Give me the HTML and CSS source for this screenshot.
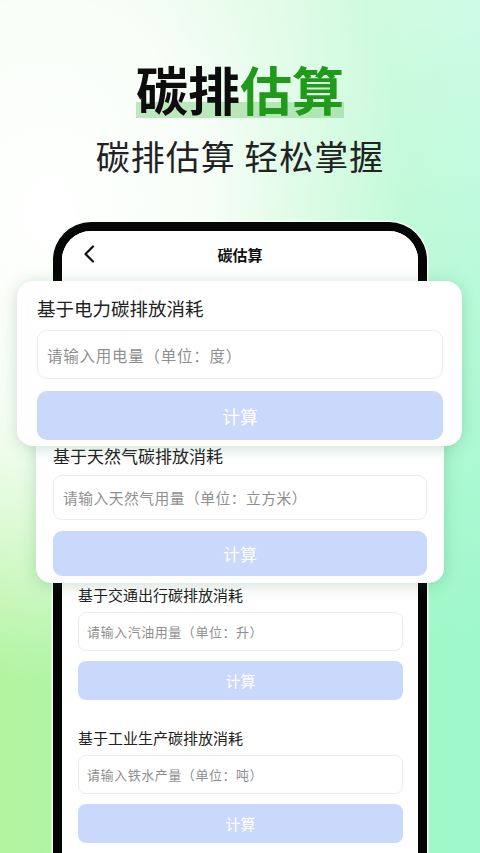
FILE: index.html
```html
<!DOCTYPE html>
<html lang="zh-CN">
<head>
<meta charset="UTF-8" />
<meta name="viewport" content="width=device-width, initial-scale=1" />
<title>碳排估算</title>
<link rel="stylesheet" href="styles.css">
</head>
<body>
  <main class="page">
    <header class="hero">
      <h1 class="hero-title">碳排<span class="green">估算</span></h1>
      <p class="hero-sub">碳排估算 轻松掌握</p>
    </header>

    <div class="phone">
      <div class="screen">
        <div class="topbar">
          <svg class="back" width="14" height="18" viewBox="0 0 14 18" aria-hidden="true">
            <path d="M11 1.5 L3.5 9 L11 16.5" fill="none" stroke="#111" stroke-width="2.2" stroke-linecap="round" stroke-linejoin="round"/>
          </svg>
          <span class="topbar-title">碳估算</span>
        </div>

        <div class="list">
          <section class="calc">
            <h2>基于电力碳排放消耗</h2>
            <input type="text" placeholder="请输入用电量（单位：度）">
            <button type="button">计算</button>
          </section>
          <section class="calc">
            <h2>基于天然气碳排放消耗</h2>
            <input type="text" placeholder="请输入天然气用量（单位：立方米）">
            <button type="button">计算</button>
          </section>
          <section class="calc">
            <h2>基于交通出行碳排放消耗</h2>
            <input type="text" placeholder="请输入汽油用量（单位：升）">
            <button type="button">计算</button>
          </section>
          <section class="calc">
            <h2>基于工业生产碳排放消耗</h2>
            <input type="text" placeholder="请输入铁水产量（单位：吨）">
            <button type="button">计算</button>
          </section>
        </div>
      </div>
    </div>

    <!-- enlarged cards floating over the phone -->
    <section class="pop pop-gas">
      <h2>基于天然气碳排放消耗</h2>
      <input type="text" placeholder="请输入天然气用量（单位：立方米）">
      <button type="button">计算</button>
    </section>
    <section class="pop pop-power">
      <h2>基于电力碳排放消耗</h2>
      <input type="text" placeholder="请输入用电量（单位：度）">
      <button type="button">计算</button>
    </section>
  </main>
</body>
</html>
```

FILE: styles.css
```css
* {
  box-sizing: border-box;
}
html, body {
  margin: 0;
  padding: 0;
}
body {
  width: 480px;
  height: 853px;
  overflow: hidden;
  font-family: "Noto Sans CJK SC", "Noto Sans", sans-serif;
  background:
    radial-gradient(ellipse 75% 55% at 10% 25%, #ffffff 0%, rgba(255,255,255,0.85) 45%, rgba(255,255,255,0) 100%),
    linear-gradient(180deg, rgba(255,255,255,0.5) 0%, rgba(255,255,255,0.2) 45%, rgba(255,255,255,0) 75%),
    linear-gradient(90deg, #b3f4a0 0%, #a6f5b6 50%, #9ef8cc 100%);
}
.page {
  position: relative;
  width: 480px;
  height: 853px;
}

/* hero */
.hero {
  text-align: center;
  padding-top: 63px;
}
.hero-title {
  display: inline-block;
  margin: 0;
  font-size: 52px;
  line-height: 52px;
  height: 55px;
  font-weight: 700;
  color: #0d0d0d;
  background: linear-gradient(180deg, transparent 39px, rgba(140, 212, 140, 0.55) 39px);
}
.green {
  color: #21991b;
}
.hero-sub {
  margin: 21px 0 0;
  font-size: 34px;
  line-height: 34px;
  letter-spacing: 1px;
  color: #222;
  font-weight: 400;
}

/* phone */
.phone {
  margin: 49px 0 0 53px;
  width: 374px;
  height: 700px;
  border: 9px solid #050505;
  border-bottom: 0;
  border-radius: 38px 38px 0 0;
  background: #fff;
  box-shadow: 0 0 0 1.5px #f4fff6;
  overflow: hidden;
}
.screen {
  background: #fff;
}
.topbar {
  position: relative;
  height: 48px;
  display: flex;
  align-items: center;
  justify-content: center;
}
.back {
  position: absolute;
  left: 20px;
  top: 14px;
}
.topbar-title {
  font-size: 15px;
  font-weight: 600;
  color: #111;
  margin-top: -2px;
}
.list {
  padding: 20px 15px 0 16px;
}
.calc {
  display: flex;
  flex-direction: column;
  margin-bottom: 28px;
}
.calc h2 {
  margin: 0 0 7px;
  font-size: 15px;
  line-height: 20px;
  font-weight: 400;
  color: #222;
}
.calc input,
.pop input {
  width: 100%;
  border: 1px solid #ececec;
  border-radius: 8px;
  background: #fff;
  font-family: inherit;
  outline: none;
}
.calc input {
  height: 39px;
  padding: 0 8px;
  font-size: 13px;
  letter-spacing: 0.55px;
}
input::placeholder {
  color: #8f8f8f;
}
.calc button,
.pop button {
  width: 100%;
  border: none;
  border-radius: 8px;
  background: #cad8fb;
  color: #fff;
  font-family: inherit;
}
.calc button {
  margin-top: 10px;
  height: 39px;
  font-size: 15px;
}

/* floating cards */
.pop {
  position: absolute;
  display: flex;
  flex-direction: column;
  background: #fff;
  border-radius: 16px;
  box-shadow: 0 2px 16px rgba(30, 110, 60, 0.22);
}
.pop h2 {
  margin: 0;
  font-weight: 400;
  color: #222;
}
.pop-power {
  left: 17px;
  top: 281px;
  width: 445px;
  height: 165px;
  padding: 15px 19px 0 20px;
}
.pop-power h2 {
  font-size: 18.5px;
  line-height: 24px;
}
.pop-power input {
  margin-top: 10px;
  height: 49px;
  padding: 0 9px;
  font-size: 15.5px;
  letter-spacing: 0.75px;
  border-radius: 10px;
}
.pop-power button {
  margin-top: 12px;
  height: 49px;
  font-size: 18px;
  border-radius: 10px;
}
.pop-gas {
  left: 36px;
  top: 430px;
  width: 408px;
  height: 153px;
  padding: 15px 17px 0 17px;
  border-radius: 15px;
}
.pop-gas h2 {
  font-size: 17px;
  line-height: 22px;
}
.pop-gas input {
  margin-top: 8px;
  height: 45px;
  padding: 0 9px;
  font-size: 14.75px;
  letter-spacing: 0.5px;
  border-radius: 9px;
}
.pop-gas button {
  margin-top: 11px;
  height: 45px;
  font-size: 17px;
  border-radius: 9px;
}
```
